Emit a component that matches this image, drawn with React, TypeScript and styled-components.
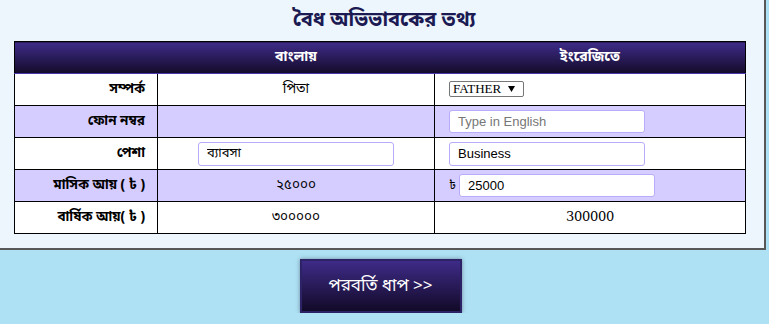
import React from "react";
import styled, { createGlobalStyle } from "styled-components";

const Global = createGlobalStyle`
  html, body { margin: 0; padding: 0; }
  body {
    background: #aee1f4;
    font-family: "Noto Sans Bengali", "Lohit Bengali", "FreeSans", "Noto Sans", sans-serif;
  }
`;

const Panel = styled.div`
  width: 764px;
  height: 248px;
  background: #edf5fd;
  border-right: 2px solid #585858;
  border-bottom: 2px solid #585858;
  display: flex;
  flex-direction: column;
`;

const Title = styled.h2`
  margin: 0;
  height: 41px;
  display: flex;
  align-items: center;
  justify-content: center;
  padding-left: 4px;
  font-size: 20px;
  font-weight: 700;
  color: #1c1a52;
`;

const Table = styled.table`
  margin-left: 14px;
  width: 731px;
  border-collapse: collapse;
  table-layout: fixed;
  font-size: 13.5px;
  color: #000;
`;

const HeadCell = styled.th`
  height: 31px;
  padding: 0;
  background: linear-gradient(#3e2b88, #130b29);
  color: #fff;
  font-size: 14px;
  font-weight: 700;
  text-align: center;
  border-top: 1px solid #000;
  border-bottom: 1px solid #4a36a8;
  &:first-child { border-left: 1px solid #000; }
  &:last-child { border-right: 1px solid #000; }
`;

const Row = styled.tr<{ $alt?: boolean }>`
  background: ${(p) => (p.$alt ? "#d5ccff" : "#ffffff")};
`;

const Label = styled.td`
  height: 31px;
  padding: 0 12px 0 0;
  text-align: right;
  font-weight: 700;
  border: 1px solid #000;
`;

const Cell = styled.td<{ $align?: "center" | "left" }>`
  height: 31px;
  padding: ${(p) => (p.$align === "left" ? "0 0 0 14px" : "0")};
  text-align: ${(p) => p.$align ?? "center"};
  border: 1px solid #000;
`;

const Box = styled.input<{ $w?: number; $h?: number }>`
  box-sizing: border-box;
  width: ${(p) => p.$w ?? 196}px;
  height: ${(p) => p.$h ?? 24}px;
  border: 1px solid #b7acf7;
  border-radius: 3px;
  background: #fff;
  padding: 0 8px;
  font-size: 13px;
  color: #000;
  vertical-align: middle;
  font-family: "Liberation Sans", Arial, sans-serif;
  outline: none;
  &::placeholder { color: #767676; }
`;

const BnBox = styled(Box)`
  font-family: "Noto Sans Bengali", "Lohit Bengali", "FreeSans", sans-serif;
`;

const arrow =
  "data:image/svg+xml;utf8,<svg xmlns='http://www.w3.org/2000/svg' width='7' height='6'><path d='M0 0H7L3.5 6Z' fill='black'/></svg>";

const Select = styled.select`
  appearance: none;
  -webkit-appearance: none;
  box-sizing: border-box;
  height: 16px;
  width: 75px;
  padding: 0 0 0 3px;
  font-family: "Liberation Serif", "Times New Roman", serif;
  font-size: 13px;
  line-height: 14px;
  border: 1px solid #767676;
  border-radius: 2px;
  background: #fff url("${arrow}") no-repeat right 8px center;
  color: #000;
  vertical-align: middle;
`;

const Taka = styled.span`
  display: inline-block;
  width: 10px;
  font-size: 12px;
  vertical-align: middle;
`;

const Num = styled.span`
  font-family: "DejaVu Serif", serif;
  font-size: 13px;
  letter-spacing: -0.3px;
`;

const Footer = styled.div`
  display: flex;
  justify-content: center;
  padding-top: 9px;
  padding-right: 8px;
`;

const NextButton = styled.button`
  box-sizing: border-box;
  width: 162px;
  height: 54px;
  border: 2px solid #2c2266;
  background: linear-gradient(#3e2b88, #120a28);
  color: #fff;
  font-family: "Noto Sans Bengali", "Lohit Bengali", "FreeSans", sans-serif;
  font-size: 17px;
  box-shadow: 0 0 4px rgba(60, 60, 80, 0.55);
  cursor: pointer;
`;

export default function App() {
  return (
    <>
      <Global />
      <Panel>
        <Title>বৈধ অভিভাবকের তথ্য</Title>
        <Table>
          <colgroup>
            <col style={{ width: 143 }} />
            <col style={{ width: 277 }} />
            <col style={{ width: 311 }} />
          </colgroup>
          <thead>
            <tr>
              <HeadCell></HeadCell>
              <HeadCell>বাংলায়</HeadCell>
              <HeadCell>ইংরেজিতে</HeadCell>
            </tr>
          </thead>
          <tbody>
            <Row>
              <Label>সম্পর্ক</Label>
              <Cell>পিতা</Cell>
              <Cell $align="left">
                <Select defaultValue="FATHER">
                  <option>FATHER</option>
                  <option>MOTHER</option>
                </Select>
              </Cell>
            </Row>
            <Row $alt>
              <Label>ফোন নম্বর</Label>
              <Cell></Cell>
              <Cell $align="left">
                <Box $h={23} placeholder="Type in English" />
              </Cell>
            </Row>
            <Row>
              <Label>পেশা</Label>
              <Cell>
                <BnBox defaultValue="ব্যাবসা" />
              </Cell>
              <Cell $align="left">
                <Box defaultValue="Business" />
              </Cell>
            </Row>
            <Row $alt>
              <Label>মাসিক আয় ( ৳ )</Label>
              <Cell>২৫০০০</Cell>
              <Cell $align="left">
                <Taka>৳</Taka>
                <Box $h={23} defaultValue="25000" />
              </Cell>
            </Row>
            <Row>
              <Label>বার্ষিক আয়( ৳ )</Label>
              <Cell>৩০০০০০</Cell>
              <Cell>
                <Num>300000</Num>
              </Cell>
            </Row>
          </tbody>
        </Table>
      </Panel>
      <Footer>
        <NextButton>পরবর্তি ধাপ &gt;&gt;</NextButton>
      </Footer>
    </>
  );
}
